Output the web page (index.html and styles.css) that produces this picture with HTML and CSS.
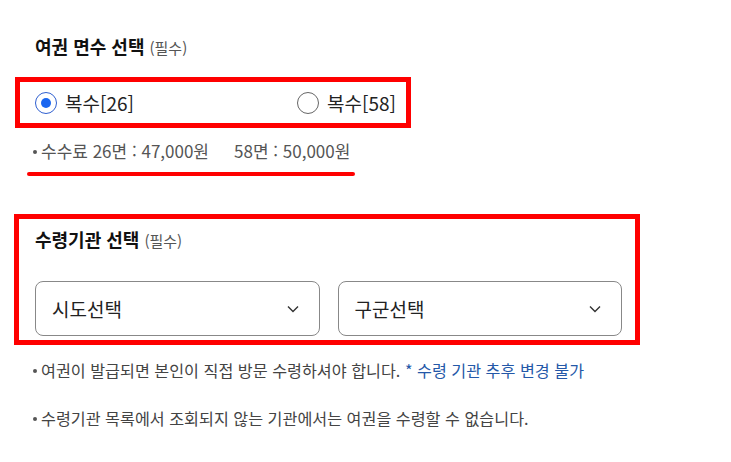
FILE: index.html
```html
<!DOCTYPE html>
<html lang="ko">
<head>
  <meta charset="UTF-8">
  <meta name="viewport" content="width=device-width, initial-scale=1.0">
  <title>여권 수령 선택</title>
  <link rel="stylesheet" href="styles.css">
</head>
<body>
  <div class="page">
    <h2 class="title first">여권 면수 선택 <span class="req">(필수)</span></h2>

    <!-- 면수 선택 -->
    <div class="mark-box radio-box">
      <label class="radio">
        <input type="radio" name="pages" checked>
        <span class="dot"></span>
        복수[26]
      </label>
      <label class="radio">
        <input type="radio" name="pages">
        <span class="dot"></span>
        복수[58]
      </label>
    </div>

    <p class="fee"><span class="bullet"></span>수수료 26면 : 47,000원<span class="fee-gap"></span>58면 : 50,000원</p>
    <div class="underline"></div>

    <!-- 수령기관 선택 -->
    <div class="mark-box office-box">
      <h2 class="title">수령기관 선택 <span class="req">(필수)</span></h2>
      <div class="selects">
        <div class="select">
          <span>시도선택</span>
          <svg width="12" height="8" viewBox="0 0 12 8"><path d="M1 1.5 6 6.5 11 1.5" fill="none" stroke="#333" stroke-width="1.4"/></svg>
        </div>
        <div class="select">
          <span>구군선택</span>
          <svg width="12" height="8" viewBox="0 0 12 8"><path d="M1 1.5 6 6.5 11 1.5" fill="none" stroke="#333" stroke-width="1.4"/></svg>
        </div>
      </div>
    </div>

    <p class="note"><span class="bullet"></span>여권이 발급되면 본인이 직접 방문 수령하셔야 합니다. <span class="blue">* 수령 기관 추후 변경 불가</span></p>
    <p class="note"><span class="bullet"></span>수령기관 목록에서 조회되지 않는 기관에서는 여권을 수령할 수 없습니다.</p>
  </div>
</body>
</html>
```

FILE: styles.css
```css
* {
  margin: 0;
  padding: 0;
  box-sizing: border-box;
}

body {
  background-color: #fff;
  font-family: "Noto Sans CJK KR", "Noto Sans", sans-serif;
  color: #222;
}

.page {
  padding: 33px 0 0 15px;
  width: 640px;
}

.title {
  font-size: 18px;
  font-weight: 700;
  line-height: 26px;
  color: #111;
}

.title.first {
  padding-left: 20px;
}

.req {
  font-size: 15px;
  font-weight: 400;
  color: #555;
}

/* 빨간 표시 박스 */
.mark-box {
  border: 5px solid #f00;
}

.radio-box {
  width: 396px;
  height: 51px;
  margin-top: 16px;
  display: flex;
  justify-content: space-between;
  align-items: center;
  padding: 0 10px 0 15px;
}

.radio {
  display: flex;
  align-items: center;
  gap: 8px;
  font-size: 19px;
  color: #222;
  cursor: pointer;
}

.radio input {
  display: none;
}

.dot {
  width: 22px;
  height: 22px;
  border: 1px solid #666;
  border-radius: 50%;
  display: flex;
  align-items: center;
  justify-content: center;
}

.radio input:checked + .dot {
  border-color: #2f5fd0;
}

.radio input:checked + .dot::after {
  content: "";
  width: 10px;
  height: 10px;
  border-radius: 50%;
  background-color: #1a66f0;
}

.bullet {
  display: inline-block;
  width: 4px;
  height: 4px;
  border-radius: 50%;
  background-color: #555;
  vertical-align: middle;
  margin: 0 4px 3px 3px;
}

.fee {
  font-size: 17px;
  line-height: 24px;
  color: #555;
  margin-top: 11px;
  padding-left: 15px;
}

.fee-gap {
  display: inline-block;
  width: 25px;
}

.underline {
  width: 328px;
  height: 4px;
  border-radius: 2px;
  background-color: #f00;
  margin: 9px 0 0 12px;
}

.office-box {
  width: 626px;
  height: 131px;
  margin: 38px 0 0 -1px;
  padding: 7px 13px 0 16px;
}

.selects {
  display: flex;
  gap: 18px;
  margin-top: 27px;
}

.select {
  flex: 1;
  height: 55px;
  border: 1px solid #888;
  border-radius: 8px;
  display: flex;
  align-items: center;
  justify-content: space-between;
  padding: 0 20px 0 16px;
  font-size: 19px;
  color: #222;
}

.note {
  font-size: 16.2px;
  line-height: 24px;
  color: #444;
  padding-left: 15px;
  margin-top: 13px;
}

.note + .note {
  margin-top: 24px;
}

.blue {
  color: #2458a8;
}
```
